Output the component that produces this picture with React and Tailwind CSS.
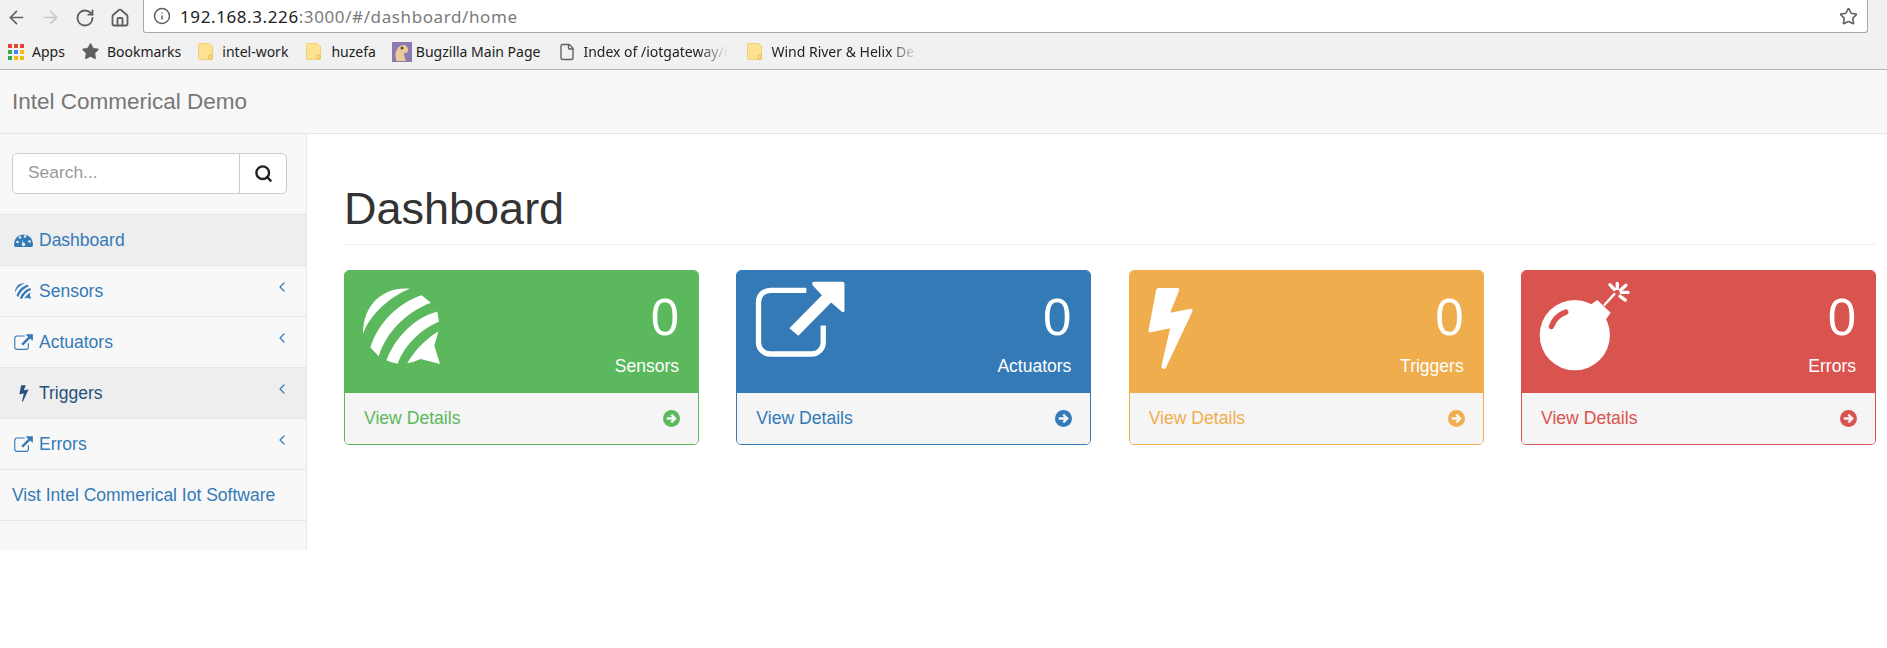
import { ArrowLeft, ArrowRight, ChevronLeft, File, House, Info, RotateCw, Search, Star } from "lucide-react";

function SensorIcon({ className }) {
  return (
    <svg viewBox="0 0 230 227" className={className} fill="currentColor">
      <path d="M140 2 C70 -5 0 40 0 137 C20 80 80 25 140 2 Z" />
      <path d="M175 22 C105 45 45 105 22 178 L47 204 C70 130 130 72 203 44 Z" />
      <path d="M222 70 C150 90 95 150 70 216 Q85 224 103 226 C125 170 170 125 227 100 Z" />
      <path d="M132 225 C155 185 190 150 225 130 L213 172 L230 227 L172 212 Q150 222 132 225 Z" />
    </svg>
  );
}

function ExternalIcon({ className }) {
  return (
    <svg viewBox="75 63 270 229" className={className} fill="currentColor">
      <path d="M229 91 H120 a35 35 0 0 0 -35 35 V248 a35 35 0 0 0 35 35 H245 a35 35 0 0 0 35 -35 V197" fill="none" stroke="currentColor" strokeWidth="16" />
      <path d="M252 65 H338 Q344 65 344 71 V152 Q344 160 336 156 L304 128 L205 228 L178 205 L276 106 L248 76 Q244 66 252 65 Z" />
    </svg>
  );
}

function BoltIcon({ className }) {
  return (
    <svg viewBox="80 78 145 255" className={className} fill="currentColor">
      <path d="M115 83 H172 Q179 84 177 91 L150 158 L212 146 Q220 146 217 154 L137 324 Q130 332 123 322 L150 205 L92 217 Q83 217 85 209 L108 88 Q110 83 115 83 Z" />
    </svg>
  );
}

function BombIcon({ className }) {
  return (
    <svg viewBox="115 60 275 275" className={className} fill="currentColor">
      <circle cx="225" cy="225" r="105" />
      <path d="M272 134 L292 120 L332 158 L318 178 Z" />
      <path d="M312 136 L345 100" fill="none" stroke="currentColor" strokeWidth="7" />
      <path d="M352 70 V86 M330 74 L343 88 M378 76 L362 90 M384 97 H364 M376 120 L360 108" fill="none" stroke="currentColor" strokeWidth="10" strokeLinecap="round" />
      <path d="M155 199 Q167 167 198 156" fill="none" stroke="#d9534f" strokeWidth="16" strokeLinecap="round" />
    </svg>
  );
}

function GaugeIcon({ className }) {
  return (
    <svg viewBox="0 0 19 14" className={className}>
      <path d="M0 11 a9.5 9.5 0 0 1 19 0 q0 1.5 -.8 3 H.8 Q0 12.500 0 11 Z" fill="currentColor" />
      <circle cx="3.500" cy="9" r="1.300" fill="#eeeeee" />
      <circle cx="6" cy="4.500" r="1.300" fill="#eeeeee" />
      <circle cx="11" cy="3.500" r="1.300" fill="#eeeeee" />
      <circle cx="15.500" cy="8.500" r="1.300" fill="#eeeeee" />
      <path d="M8.800 12 L8 6.500 L10.800 12 Z" fill="#eeeeee" />
      <circle cx="9.500" cy="11.500" r="1.700" fill="#eeeeee" />
    </svg>
  );
}

function ArrowCircle({ className }) {
  return (
    <svg viewBox="0 0 16 16" className={className}>
      <circle cx="8" cy="8" r="8" fill="currentColor" />
      <path d="M3.500 8 H11 M7.800 4.300 L11.500 8 L7.800 11.700" fill="none" stroke="#f5f5f5" strokeWidth="2.200" />
    </svg>
  );
}

function Folder() {
  return (
    <svg viewBox="0 0 15 17" className="w-[15px] h-[17px] shrink-0">
      <path d="M1 0.500 H11 L14.500 3 V15.500 Q14.500 16.500 13.500 16.500 H1.500 Q0.500 16.500 0.500 15.500 V1 Z" fill="#fde293" stroke="#f0cf75" />
      <rect x="11" y="12" width="3" height="4" rx="1" fill="none" stroke="#e7b94e" />
    </svg>
  );
}

function AppsGrid() {
  const colors = ["#e94235", "#e94235", "#e94235", "#34a853", "#4285f4", "#fbbc05", "#34a853", "#fbbc05", "#fbbc05"];
  return (
    <div className="grid grid-cols-3 gap-[2px] w-[16px] shrink-0">
      {colors.map((c, i) => (
        <span key={i} className="h-[4px] w-[4px]" style={{ backgroundColor: c }}></span>
      ))}
    </div>
  );
}

function Bugzilla() {
  return (
    <svg viewBox="0 0 20 20" className="w-[20px] h-[20px] shrink-0">
      <rect width="20" height="20" fill="#8c7bb0" />
      <path d="M4 18 Q2 8 8 4 Q14 1 16 7 Q17 11 12 11 Q12 15 14 19 H5 Z" fill="#eccb9a" />
      <circle cx="10" cy="6" r="1.500" fill="#5a4630" />
    </svg>
  );
}

function ChromeBars() {
  return (
    <div className="bg-[#f1f1f1] border-b border-[#b5b5b5] h-[70px] font-['Noto_Sans',sans-serif] text-[#222222]">
      <div className="flex items-start h-[34px]">
        <div className="flex items-center h-[33px] w-[143px] shrink-0 text-[#5f5f5f] pl-[6px] pt-[2px]">
          <ArrowLeft size={21} strokeWidth={1.800} />
          <ArrowRight size={21} strokeWidth={1.800} className="ml-[13px] text-[#c8c8c8]" />
          <RotateCw size={20} strokeWidth={2.200} className="ml-[14px]" />
          <House size={20} strokeWidth={2.200} className="ml-[15px]" />
        </div>
        <div className="flex-1 mr-[19px] h-[33px] bg-white border border-t-0 border-[#a9a9a9] rounded-b-[3px] flex items-center pl-[9px] pr-[10px]">
          <Info size={18} strokeWidth={2} className="text-[#5f5f5f] shrink-0" />
          <span className="ml-[9px] text-[17px] tracking-[0.600px] leading-[32px] mt-[1px]">
            192.168.3.226<span className="text-[#7b7b7b]">:3000/#/dashboard/home</span>
          </span>
          <Star size={19} strokeWidth={2} className="ml-auto text-[#5f5f5f] translate-x-[1px]" />
        </div>
      </div>
      <div className="flex items-center h-[35px] pl-[8px] text-[14px]">
        <AppsGrid />
        <span className="ml-[8px]">Apps</span>
        <Star size={19} fill="currentColor" strokeWidth={1} className="ml-[16px] text-[#5f5f5f] shrink-0" />
        <span className="ml-[7px]">Bookmarks</span>
        <div className="ml-[17px]"><Folder /></div>
        <span className="ml-[9px]">intel-work</span>
        <div className="ml-[18px]"><Folder /></div>
        <span className="ml-[10px]">huzefa</span>
        <div className="ml-[16px]"><Bugzilla /></div>
        <span className="ml-[4px]">Bugzilla Main Page</span>
        <File size={18} strokeWidth={1.800} className="ml-[18px] text-[#5f5f5f] shrink-0" />
        <span className="ml-[7px] w-[145px] whitespace-nowrap [mask-image:linear-gradient(to_right,black_80%,transparent)]">Index of /iotgateway/r</span>
        <div className="ml-[19px]"><Folder /></div>
        <span className="ml-[9px] w-[147px] whitespace-nowrap [mask-image:linear-gradient(to_right,black_80%,transparent)]">Wind River &amp; Helix De</span>
      </div>
    </div>
  );
}

const navItems = [
  { label: "Dashboard", icon: <GaugeIcon className="w-[19px] h-[14px]" />, row: "bg-[#eeeeee]", text: "text-[#337ab7]" },
  { label: "Sensors", icon: <SensorIcon className="w-[16px] h-[16px] ml-[1px]" />, chevron: true, row: "", text: "text-[#337ab7]" },
  { label: "Actuators", icon: <ExternalIcon className="w-[19px] h-[16px]" />, chevron: true, row: "", text: "text-[#337ab7]" },
  { label: "Triggers", icon: <BoltIcon className="w-[10px] h-[17px] ml-[5px]" />, chevron: true, row: "bg-[#eeeeee]", text: "text-[#23527c]" },
  { label: "Errors", icon: <ExternalIcon className="w-[19px] h-[16px]" />, chevron: true, row: "", text: "text-[#337ab7]" },
];

function Sidebar() {
  return (
    <aside className="w-[307px] h-[416px] shrink-0 bg-[#f8f8f8] border-r border-[#e7e7e7]">
      <div className="pt-[19px] pb-[19px] pl-[12px] pr-[19px] border-b border-[#e7e7e7] h-[81px]">
        <div className="flex h-[41px] bg-white border border-[#cccccc] rounded-[5px]">
          <span className="flex-1 pl-[15px] text-[17.400px] text-[#999999] leading-[37px]">Search...</span>
          <div className="w-[47px] border-l border-[#cccccc] flex items-center justify-center text-[#222222]">
            <Search size={19} strokeWidth={3} />
          </div>
        </div>
      </div>
      {navItems.map((item) => (
        <div key={item.label} className={`flex items-center h-[51px] pl-[14px] pr-[16px] border-b border-[#e7e7e7] text-[17.500px] ${item.row} ${item.text}`}>
          <span className="w-[19px] flex justify-start text-[#337ab7] shrink-0">
            <span className={item.label === "Triggers" ? "text-[#23527c]" : ""}>{item.icon}</span>
          </span>
          <span className="ml-[6px]">{item.label}</span>
          {item.chevron && <ChevronLeft size={16} strokeWidth={1.800} className="ml-auto -mt-[8px] text-[#337ab7]" />}
        </div>
      ))}
      <div className="flex items-center h-[51px] pl-[12px] border-b border-[#e7e7e7] text-[17.500px] text-[#337ab7]">
        Vist Intel Commerical Iot Software
      </div>
    </aside>
  );
}

const cards = [
  { label: "Sensors", icon: <SensorIcon className="w-[77px] h-[76px] -mt-[2px]" />, head: "bg-[#5cb85c]", border: "border-[#5cb85c]", text: "text-[#5cb85c]" },
  { label: "Actuators", icon: <ExternalIcon className="w-[90px] h-[76px] -mt-[9px]" />, head: "bg-[#337ab7]", border: "border-[#337ab7]", text: "text-[#337ab7]" },
  { label: "Triggers", icon: <BoltIcon className="w-[48px] h-[85px] -mt-[4px] -ml-[1px]" />, head: "bg-[#f0ad4e]", border: "border-[#f0ad4e]", text: "text-[#f0ad4e]" },
  { label: "Errors", icon: <BombIcon className="w-[92px] h-[92px] -mt-[10px] -ml-[2px]" />, head: "bg-[#d9534f]", border: "border-[#d9534f]", text: "text-[#d9534f]" },
];

function StatCard({ card }) {
  return (
    <div className={`border rounded-[5px] overflow-hidden ${card.border}`}>
      <div className={`h-[122px] flex justify-between items-start pl-[18px] pr-[19px] pt-[19px] text-white ${card.head}`}>
        {card.icon}
        <div className="flex flex-col items-end">
          <div className="text-[51px] leading-[55px]">0</div>
          <div className="text-[17.500px] leading-[22px] mt-[10px]">{card.label}</div>
        </div>
      </div>
      <div className={`h-[51px] bg-[#f5f5f5] flex items-center justify-between pl-[19px] pr-[18px] text-[17.600px] ${card.text}`}>
        <span>View Details</span>
        <ArrowCircle className="w-[17px] h-[17px]" />
      </div>
    </div>
  );
}

export default function App() {
  return (
    <div className="min-h-[648px] bg-white font-['Liberation_Sans',Arial,sans-serif]">
      <ChromeBars />
      <div className="h-[64px] bg-[#f8f8f8] border-b border-[#e7e7e7] flex items-center pl-[12px] text-[22.500px] text-[#777777]">
        Intel Commerical Demo
      </div>
      <div className="flex">
        <Sidebar />
        <main className="flex-1 pl-[37px] pr-[11px] pt-[48px]">
          <h1 className="text-[45px] leading-[53px] pb-[9px] border-b border-[#eeeeee] text-[#333333]">Dashboard</h1>
          <div className="grid grid-cols-4 gap-[37.330px] mt-[25px]">
            {cards.map((card) => (
              <StatCard key={card.label} card={card} />
            ))}
          </div>
        </main>
      </div>
    </div>
  );
}
